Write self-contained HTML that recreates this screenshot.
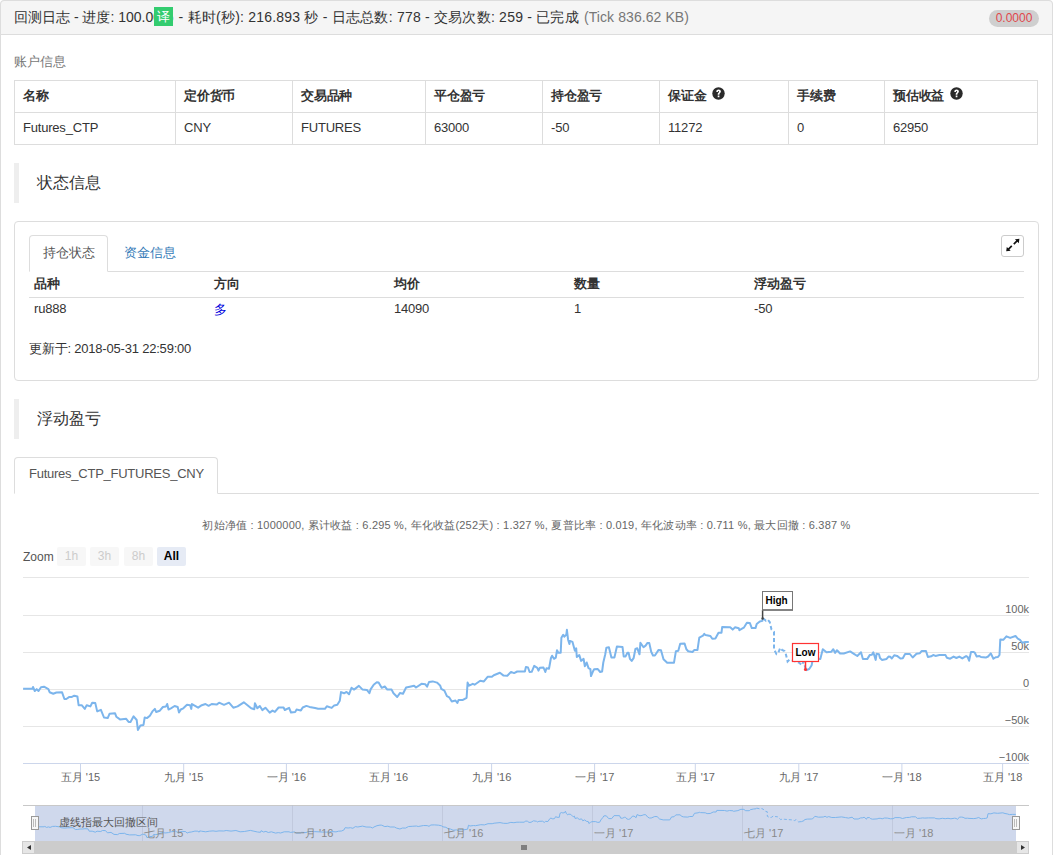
<!DOCTYPE html>
<html><head><meta charset="utf-8">
<style>
*{box-sizing:border-box;margin:0;padding:0}
html,body{width:1053px;height:855px;overflow:hidden;background:#fff}
body{font-family:"Liberation Sans",sans-serif;font-size:14px;color:#333;position:relative}
.abs{position:absolute}
.panel{position:absolute;left:0;top:0;width:1053px;height:900px;border:1px solid #ddd;border-radius:4px}
.head{position:absolute;left:0;top:0;width:1053px;height:35px;background:#f5f5f5;border:1px solid #ddd;border-radius:4px 4px 0 0}
.htxt{position:absolute;top:9px;font-size:14px;white-space:nowrap;color:#333}
.gray{color:#777}
.yi{display:inline-block;background:#3cb371;color:#fff;}
.badge{position:absolute;left:989px;top:10px;width:50px;height:17px;border-radius:9px;background:#cfcfcf;color:#e0474c;font-size:12px;text-align:center;line-height:17px}
table{border-collapse:collapse}
.acct{position:absolute;left:14px;top:80px;width:1024px;border:1px solid #ddd}
.acct td,.acct th{border:1px solid #ddd;height:32px;padding:0 8px 2px;letter-spacing:-0.2px;text-align:left;font-size:13px;white-space:nowrap}
.acct th{font-weight:bold}
.sec{position:absolute;left:14px;width:5px;height:40px;background:#eee}
.sectxt{position:absolute;left:37px;font-size:16px;color:#333}
.box{position:absolute;left:14px;top:221px;width:1025px;height:160px;border:1px solid #ddd;border-radius:4px}
.tab{position:absolute;border:1px solid #ddd;border-bottom-color:#fff;border-radius:4px 4px 0 0;background:#fff}
.q{display:inline-block;width:12px;height:12px;border-radius:50%;background:#222;color:#fff;font-size:10px;line-height:12px;text-align:center;font-weight:bold;vertical-align:1px;margin-left:5px}
.ph{top:275px;font-size:13px;font-weight:bold;white-space:nowrap}
.pb{top:301px;font-size:13px;white-space:nowrap;letter-spacing:-0.2px}
.zb{position:absolute;top:547px;width:29px;height:19px;background:#f7f7f7;color:#ccc;font-size:12px;text-align:center;line-height:19px;border-radius:2px}
.zb.sel{background:#e6ebf5;color:#000;font-weight:bold}
.qi{position:relative;left:6px;top:0px;vertical-align:0px}
</style></head><body>
<div class="panel"></div>
<div class="head"></div>
<div class="htxt" style="left:14px">回测日志 - 进度: 100.00%</div>
<div class="htxt" style="left:178.6px;letter-spacing:0.22px">- 耗时(秒): 216.893 秒 - 日志总数: 778 - 交易次数: 259 - 已完成</div>
<div class="htxt gray" style="left:584px;letter-spacing:0.08px">(Tick 836.62 KB)</div>
<div class="abs" style="left:154px;top:7px;width:19px;height:19px;background:#33cc6f;color:#fff;font-size:13px;line-height:19px;text-align:center">译</div>
<div class="badge">0.0000</div>

<div class="abs gray" style="left:14px;top:53px;font-size:13px">账户信息</div>
<table class="acct">
<tr><th style="width:161px">名称</th><th style="width:117px">定价货币</th><th style="width:133px">交易品种</th><th style="width:117px">平仓盈亏</th><th style="width:117px">持仓盈亏</th><th style="width:129px">保证金<svg class="qi" width="13" height="13" viewBox="0 0 13 13"><circle cx="6.5" cy="6.5" r="6.2" fill="#2a2a2a"/><path d="M4.3 5.0 C4.3 3.3 5.4 2.6 6.6 2.6 C7.9 2.6 8.9 3.4 8.9 4.6 C8.9 5.9 7.4 6.2 7.4 7.3 L7.4 7.7 L5.7 7.7 L5.7 7.1 C5.7 5.6 7.1 5.4 7.1 4.7 C7.1 4.3 6.9 4.0 6.6 4.0 C6.1 4.0 5.9 4.4 5.9 5.0 Z M5.7 8.6 H7.4 V10.2 H5.7 Z" fill="#fff"/></svg></th><th style="width:96px">手续费</th><th>预估收益<svg class="qi" width="13" height="13" viewBox="0 0 13 13"><circle cx="6.5" cy="6.5" r="6.2" fill="#2a2a2a"/><path d="M4.3 5.0 C4.3 3.3 5.4 2.6 6.6 2.6 C7.9 2.6 8.9 3.4 8.9 4.6 C8.9 5.9 7.4 6.2 7.4 7.3 L7.4 7.7 L5.7 7.7 L5.7 7.1 C5.7 5.6 7.1 5.4 7.1 4.7 C7.1 4.3 6.9 4.0 6.6 4.0 C6.1 4.0 5.9 4.4 5.9 5.0 Z M5.7 8.6 H7.4 V10.2 H5.7 Z" fill="#fff"/></svg></th></tr>
<tr><td>Futures_CTP</td><td>CNY</td><td>FUTURES</td><td>63000</td><td>-50</td><td>11272</td><td>0</td><td>62950</td></tr>
</table>

<div class="sec" style="top:163px"></div>
<div class="sectxt" style="top:173px">状态信息</div>

<div class="box"></div>
<div class="abs" style="left:29px;top:271px;width:995px;height:1px;background:#ddd"></div>
<div class="tab" style="left:29px;top:235px;width:79px;height:37px"></div>
<div class="abs" style="left:43px;top:244px;font-size:13px;color:#555">持仓状态</div>
<div class="abs" style="left:124px;top:244px;font-size:13px;color:#337ab7">资金信息</div>


<div class="abs" style="left:29px;top:297px;width:995px;height:1px;background:#ddd"></div>
<div class="abs ph" style="left:34px">品种</div><div class="abs ph" style="left:214px">方向</div><div class="abs ph" style="left:394px">均价</div><div class="abs ph" style="left:574px">数量</div><div class="abs ph" style="left:754px">浮动盈亏</div>
<div class="abs pb" style="left:34px">ru888</div><div class="abs pb" style="left:214px;color:#0000dd">多</div><div class="abs pb" style="left:394px">14090</div><div class="abs pb" style="left:574px">1</div><div class="abs pb" style="left:754px">-50</div>
<div class="abs" style="left:29px;top:340px;font-size:13px;letter-spacing:-0.2px">更新于: 2018-05-31 22:59:00</div>
<div class="abs" style="left:1001px;top:235px;width:23px;height:22px;border:1px solid #ccc;border-radius:3px"></div>
<svg class="abs" style="left:1001px;top:235px" width="23" height="22" viewBox="0 0 23 22"><path d="M18.4 3.8 L17.8 8.2 L16.4 6.8 L13.4 9.8 L12.2 8.6 L15.2 5.6 L13.9 4.3 Z" fill="#111"/><path d="M5.2 16.3 L5.8 11.9 L7.2 13.3 L10.2 10.3 L11.4 11.5 L8.4 14.5 L9.7 15.8 Z" fill="#111"/></svg>

<div class="sec" style="top:399px"></div>
<div class="sectxt" style="top:409px">浮动盈亏</div>
<div class="abs" style="left:14px;top:493px;width:1025px;height:1px;background:#ddd"></div>
<div class="tab" style="left:14px;top:457px;width:204px;height:37px"></div>
<div class="abs" style="left:29px;top:466px;font-size:13px;color:#555;letter-spacing:-0.25px">Futures_CTP_FUTURES_CNY</div>

<div class="abs" style="left:0;top:518px;width:1053px;text-align:center;font-size:11px;color:#666;letter-spacing:0.2px">初始净值 : 1000000, 累计收益 : 6.295 %, 年化收益(252天) : 1.327 %, 夏普比率 : 0.019, 年化波动率 : 0.711 %, 最大回撤 : 6.387 %</div>
<div class="abs" style="left:23px;top:550px;font-size:12px;color:#555">Zoom</div>
<div class="zb" style="left:57px">1h</div><div class="zb" style="left:90px">3h</div><div class="zb" style="left:124px">8h</div><div class="zb sel" style="left:157px">All</div>
<svg class="abs" style="left:0;top:0" width="1053" height="855" viewBox="0 0 1053 855">
<line x1="23" x2="1029" y1="577.5" y2="577.5" stroke="#e6e6e6" stroke-width="1"/><line x1="23" x2="1029" y1="615.5" y2="615.5" stroke="#e6e6e6" stroke-width="1"/><line x1="23" x2="1029" y1="652.5" y2="652.5" stroke="#e6e6e6" stroke-width="1"/><line x1="23" x2="1029" y1="689.5" y2="689.5" stroke="#e6e6e6" stroke-width="1"/><line x1="23" x2="1029" y1="726.5" y2="726.5" stroke="#e6e6e6" stroke-width="1"/>
<line x1="23" x2="1029" y1="763.5" y2="763.5" stroke="#ccd6eb"/>
<line x1="80.5" x2="80.5" y1="763" y2="781" stroke="#ccd6eb"/><line x1="183.7" x2="183.7" y1="763" y2="781" stroke="#ccd6eb"/><line x1="286.4" x2="286.4" y1="763" y2="781" stroke="#ccd6eb"/><line x1="388.4" x2="388.4" y1="763" y2="781" stroke="#ccd6eb"/><line x1="491.6" x2="491.6" y1="763" y2="781" stroke="#ccd6eb"/><line x1="594.6" x2="594.6" y1="763" y2="781" stroke="#ccd6eb"/><line x1="695.3" x2="695.3" y1="763" y2="781" stroke="#ccd6eb"/><line x1="798.8" x2="798.8" y1="763" y2="781" stroke="#ccd6eb"/><line x1="901.9" x2="901.9" y1="763" y2="781" stroke="#ccd6eb"/><line x1="1002.6" x2="1002.6" y1="763" y2="781" stroke="#ccd6eb"/>
<g font-family="Liberation Sans, sans-serif" font-size="11" fill="#666"><text x="1029" y="612.5" text-anchor="end">100k</text><text x="1029" y="649.5" text-anchor="end">50k</text><text x="1029" y="686.5" text-anchor="end">0</text><text x="1029" y="723.5" text-anchor="end">−50k</text><text x="1029" y="760.5" text-anchor="end">−100k</text><text x="80.5" y="781" text-anchor="middle">五月 '15</text><text x="183.7" y="781" text-anchor="middle">九月 '15</text><text x="286.4" y="781" text-anchor="middle">一月 '16</text><text x="388.4" y="781" text-anchor="middle">五月 '16</text><text x="491.6" y="781" text-anchor="middle">九月 '16</text><text x="594.6" y="781" text-anchor="middle">一月 '17</text><text x="695.3" y="781" text-anchor="middle">五月 '17</text><text x="798.8" y="781" text-anchor="middle">九月 '17</text><text x="901.9" y="781" text-anchor="middle">一月 '18</text><text x="1002.6" y="781" text-anchor="middle">五月 '18</text></g>
<path d="M23.1 688.8 L32.3 688.8 L33.0 687.0 L34.8 691.0 L36.7 689.1 L38.5 691.0 L41.0 687.3 L44.0 686.7 L48.4 689.1 L49.6 692.2 L53.3 693.7 L56.4 692.5 L62.0 692.2 L64.4 699.0 L66.3 699.0 L69.4 696.9 L71.9 696.9 L74.3 695.7 L77.4 696.5 L78.6 705.2 L81.7 705.2 L84.8 708.9 L86.7 705.2 L90.4 706.4 L92.2 702.7 L95.3 703.1 L97.2 711.4 L100.9 709.8 L104.0 717.5 L107.7 718.1 L109.5 713.8 L115.0 713.2 L116.3 716.7 L120.0 719.4 L126.2 718.8 L128.6 721.9 L130.5 721.9 L133.6 716.3 L136.7 720.0 L137.9 729.9 L140.4 725.6 L143.5 724.9 L144.7 717.5 L146.9 718.1 L149.9 715.7 L152.4 711.4 L154.9 708.9 L156.1 712.0 L159.8 710.7 L162.9 707.0 L166.0 706.4 L167.2 704.0 L168.5 709.5 L170.9 708.3 L174.6 706.0 L177.7 707.0 L179.0 712.6 L180.8 709.5 L183.3 708.3 L187.0 704.8 L190.1 705.2 L191.3 708.9 L191.9 704.0 L193.8 705.2 L198.1 707.7 L201.8 705.2 L205.5 704.0 L208.6 705.8 L211.7 704.0 L216.6 704.6 L219.1 702.7 L224.0 704.8 L229.0 702.7 L233.3 707.7 L237.6 706.4 L243.8 702.3 L247.5 705.2 L251.2 708.3 L254.3 709.3 L254.9 703.3 L257.3 708.3 L259.8 706.0 L262.3 710.1 L265.4 707.7 L269.7 712.6 L272.5 710.6 L274.9 711.9 L278.6 707.5 L283.6 707.5 L284.8 710.0 L289.1 707.9 L291.0 712.5 L295.3 711.9 L296.5 709.6 L300.9 710.4 L302.7 707.5 L306.4 705.9 L309.5 706.9 L315.1 708.1 L318.1 708.8 L324.9 708.8 L326.8 706.3 L331.7 707.9 L334.2 705.4 L337.3 704.7 L339.8 700.7 L341.0 692.1 L344.1 693.3 L346.5 691.9 L349.0 694.3 L351.5 687.8 L354.0 689.6 L358.9 685.9 L362.6 689.6 L366.9 689.9 L369.4 693.1 L370.6 689.4 L373.7 684.7 L376.8 682.2 L378.6 682.5 L381.7 687.8 L384.8 686.5 L387.3 689.6 L391.6 689.6 L393.5 693.3 L397.2 697.0 L399.9 693.1 L403.0 693.7 L406.1 687.5 L409.8 686.7 L414.1 685.7 L416.0 687.5 L421.5 683.8 L425.2 684.2 L427.1 686.7 L429.0 682.0 L432.7 681.4 L437.0 682.6 L440.1 685.4 L441.3 688.8 L444.4 690.6 L446.9 696.2 L449.3 697.4 L451.8 701.5 L455.5 700.5 L457.3 703.0 L458.6 699.9 L462.9 699.9 L466.6 697.8 L467.6 682.6 L469.1 685.7 L472.8 683.8 L474.6 684.7 L480.2 680.7 L483.9 681.4 L487.6 676.8 L491.9 676.8 L493.8 675.2 L499.9 672.7 L503.6 675.6 L507.3 675.8 L511.0 671.9 L514.1 673.1 L517.2 671.5 L520.0 671.5 L524.9 671.5 L525.9 666.9 L528.0 667.5 L529.6 672.0 L531.7 671.8 L534.2 665.9 L537.3 667.8 L538.5 670.6 L539.8 667.8 L543.5 667.5 L545.3 672.0 L546.5 668.3 L549.0 668.7 L550.9 658.2 L552.1 655.7 L554.0 658.8 L555.8 657.6 L557.0 650.2 L558.3 652.7 L560.7 652.7 L561.4 637.8 L563.2 634.8 L564.4 636.6 L566.3 634.8 L566.9 629.8 L568.1 639.7 L569.4 644.0 L570.0 640.9 L572.5 641.9 L574.9 650.8 L576.2 648.3 L576.8 657.0 L579.3 655.1 L581.1 660.9 L583.6 658.8 L584.8 666.2 L586.7 662.5 L588.5 668.1 L590.4 669.1 L591.0 676.1 L592.8 671.8 L594.1 669.3 L597.8 669.1 L600.2 672.0 L602.1 671.5 L603.3 662.5 L605.2 654.5 L606.4 647.7 L608.9 647.3 L611.4 657.6 L614.4 657.6 L616.9 646.5 L622.5 646.9 L623.7 656.4 L625.6 656.4 L627.4 652.7 L628.6 652.7 L629.9 658.8 L631.7 660.9 L633.6 658.2 L635.4 649.0 L637.3 648.3 L639.5 654.3 L640.4 642.8 L643.5 647.3 L645.6 645.6 L647.5 642.9 L649.3 643.1 L651.2 651.8 L653.0 655.5 L654.9 655.5 L658.6 649.9 L661.0 650.3 L663.5 659.2 L667.2 662.7 L674.0 662.7 L675.9 651.2 L678.3 650.8 L680.2 643.8 L684.5 643.4 L686.4 649.3 L688.2 651.2 L692.5 652.0 L694.4 649.9 L697.5 649.9 L699.3 637.6 L703.0 635.7 L704.3 633.9 L705.5 635.1 L710.4 636.0 L712.3 638.8 L715.4 638.5 L718.5 632.7 L721.5 632.7 L722.2 626.9 L730.2 627.3 L732.7 629.6 L735.1 627.3 L738.8 628.3 L739.4 630.2 L743.8 627.7 L746.9 622.8 L749.9 623.1 L751.8 628.1 L755.5 628.1 L756.7 624.0 L759.8 621.5 L762.3 620.9 L763.0 618.3 M806.0 670.2 L809.2 669.0 L811.7 665.2 L812.3 661.5 L815.0 659.5 L819.1 659.1 L820.3 659.1 L822.8 649.2 L826.5 652.3 L831.4 651.7 L833.3 649.2 L835.1 652.9 L837.0 650.2 L840.1 653.5 L843.8 653.5 L850.1 651.4 L854.3 654.1 L857.3 656.0 L861.0 652.3 L862.9 659.1 L867.2 659.1 L869.7 655.1 L871.9 654.7 L873.3 652.3 L875.7 659.9 L876.6 653.7 L879.0 654.2 L880.0 658.0 L881.9 659.9 L886.6 658.9 L888.5 656.6 L890.4 656.8 L891.8 658.5 L894.2 655.3 L897.1 655.9 L900.4 658.5 L902.8 658.2 L905.1 654.0 L909.9 654.0 L912.7 657.5 L916.5 653.7 L919.9 653.2 L921.8 650.9 L926.0 651.1 L927.9 657.0 L931.3 656.3 L933.2 655.0 L935.5 655.9 L939.3 655.1 L945.5 655.1 L946.9 657.8 L950.2 658.7 L953.6 656.6 L956.4 658.0 L959.3 656.6 L962.3 658.4 L966.1 656.1 L967.6 656.9 L969.1 660.7 L971.0 651.9 L973.3 651.9 L974.8 652.7 L976.7 656.5 L979.4 656.1 L980.9 656.9 L985.8 657.6 L988.1 656.5 L990.8 653.4 L993.4 658.8 L995.7 657.2 L998.0 656.9 L999.5 655.0 L1000.3 639.4 L1003.3 639.8 L1006.4 636.3 L1010.2 637.9 L1015.5 636.0 L1017.8 638.6 L1020.0 639.9 L1022.3 642.8 L1025.3 642.0 L1028.8 641.9" fill="none" stroke="#7cb5ec" stroke-width="2" stroke-linejoin="round"/>
<path d="M763.0 618.3 L766.0 620.8 L767.8 619.8 L769.7 622.0 L771.5 629.4 L774.0 631.9 L774.0 649.2 L776.5 654.1 L778.3 652.9 L780.2 648.0 L782.0 649.8 L784.5 651.0 L785.7 653.5 L787.6 661.5 L789.4 659.7 L791.9 660.3 L799.3 662.8 L801.8 665.2 L803.6 661.5 L806.0 670.2" fill="none" stroke="#7cb5ec" stroke-width="2" stroke-dasharray="4,2.5"/>
<!-- High flag -->
<line x1="762.6" x2="762.6" y1="610" y2="618.5" stroke="#444" stroke-width="1.5"/>
<circle cx="762.6" cy="618.5" r="1.2" fill="#444"/>
<rect x="762.5" y="591.5" width="30" height="18.5" fill="#fff" stroke="#777" stroke-width="1"/>
<line x1="762" x2="793" y1="610" y2="610" stroke="#777" stroke-width="1.6"/>
<text x="765.5" y="604" font-family="Liberation Sans, sans-serif" font-size="10" font-weight="bold" fill="#000">High</text>
<!-- Low flag -->
<line x1="805.5" x2="805.5" y1="661" y2="669.5" stroke="#f33" stroke-width="1.5"/>
<circle cx="805.5" cy="669.5" r="1.6" fill="#f33"/>
<rect x="792.5" y="643.5" width="26" height="18" fill="#fff" stroke="#f33" stroke-width="1.2"/>
<text x="795.5" y="655.8" font-family="Liberation Sans, sans-serif" font-size="10" font-weight="bold" fill="#000">Low</text>
<!-- navigator -->
<rect x="35" y="805" width="981" height="36" fill="#cfd8ec"/>
<line x1="23" x2="1029" y1="805.5" y2="805.5" stroke="#c8c8c8"/>
<line x1="142.5" x2="142.5" y1="805" y2="841" stroke="#b8c0d4" stroke-opacity="0.6"/><line x1="292.5" x2="292.5" y1="805" y2="841" stroke="#b8c0d4" stroke-opacity="0.6"/><line x1="442.5" x2="442.5" y1="805" y2="841" stroke="#b8c0d4" stroke-opacity="0.6"/><line x1="592.5" x2="592.5" y1="805" y2="841" stroke="#b8c0d4" stroke-opacity="0.6"/><line x1="742.5" x2="742.5" y1="805" y2="841" stroke="#b8c0d4" stroke-opacity="0.6"/><line x1="892.5" x2="892.5" y1="805" y2="841" stroke="#b8c0d4" stroke-opacity="0.6"/>
<path d="M35.1 826.8 L44.1 826.8 L44.8 826.4 L46.5 827.4 L48.4 826.9 L50.1 827.4 L52.6 826.4 L55.5 826.3 L59.8 826.9 L60.9 827.7 L64.5 828.1 L67.6 827.8 L73.0 827.7 L75.4 829.5 L77.2 829.5 L80.2 829.0 L82.7 829.0 L85.0 828.7 L88.0 828.9 L89.2 831.2 L92.2 831.2 L95.3 832.2 L97.1 831.2 L100.7 831.5 L102.5 830.5 L105.5 830.6 L107.4 832.8 L111.0 832.4 L114.0 834.4 L117.6 834.6 L119.3 833.5 L124.7 833.3 L126.0 834.2 L129.6 834.9 L135.6 834.8 L138.0 835.6 L139.8 835.6 L142.8 834.1 L145.9 835.1 L147.0 837.7 L149.5 836.6 L152.5 836.4 L153.7 834.4 L155.8 834.6 L158.7 834.0 L161.2 832.8 L163.6 832.2 L164.8 833.0 L168.4 832.6 L171.4 831.7 L174.4 831.5 L175.6 830.9 L176.9 832.3 L179.2 832.0 L182.8 831.4 L185.8 831.7 L187.1 833.1 L188.9 832.3 L191.3 832.0 L194.9 831.1 L197.9 831.2 L199.1 832.2 L199.7 830.9 L201.5 831.2 L205.7 831.8 L209.3 831.2 L213.0 830.9 L216.0 831.3 L219.0 830.9 L223.8 831.0 L226.2 830.5 L231.0 831.1 L235.9 830.5 L240.1 831.8 L244.3 831.5 L250.3 830.4 L253.9 831.2 L257.5 832.0 L260.5 832.3 L261.1 830.7 L263.5 832.0 L265.9 831.4 L268.3 832.5 L271.4 831.8 L275.6 833.1 L278.3 832.6 L280.6 833.0 L284.2 831.8 L289.1 831.8 L290.3 832.4 L294.5 831.9 L296.3 833.1 L300.5 833.0 L301.7 832.3 L306.0 832.6 L307.7 831.8 L311.3 831.4 L314.4 831.6 L319.8 831.9 L322.8 832.1 L329.4 832.1 L331.2 831.5 L336.0 831.9 L338.5 831.2 L341.5 831.0 L343.9 830.0 L345.1 827.7 L348.1 828.0 L350.4 827.7 L352.9 828.3 L355.3 826.6 L357.8 827.0 L362.5 826.1 L366.1 827.0 L370.3 827.1 L372.8 828.0 L373.9 827.0 L377.0 825.7 L380.0 825.1 L381.7 825.2 L384.8 826.6 L387.8 826.2 L390.2 827.0 L394.4 827.0 L396.3 828.0 L399.9 829.0 L402.5 828.0 L405.5 828.1 L408.6 826.5 L412.2 826.3 L416.4 826.0 L418.2 826.5 L423.6 825.5 L427.2 825.6 L429.0 826.3 L430.9 825.0 L434.5 824.9 L438.7 825.2 L441.7 825.9 L442.9 826.8 L445.9 827.3 L448.3 828.8 L450.7 829.1 L453.1 830.2 L456.7 829.9 L458.5 830.6 L459.8 829.8 L463.9 829.8 L467.6 829.2 L468.5 825.2 L470.0 826.0 L473.6 825.5 L475.4 825.7 L480.8 824.7 L484.4 824.9 L488.0 823.7 L492.2 823.7 L494.1 823.2 L500.0 822.6 L503.6 823.3 L507.2 823.4 L510.8 822.4 L513.9 822.7 L516.9 822.2 L519.6 822.2 L524.4 822.2 L525.4 821.0 L527.4 821.2 L529.0 822.4 L531.0 822.3 L533.5 820.8 L536.5 821.3 L537.7 822.0 L538.9 821.3 L542.5 821.2 L544.3 822.4 L545.5 821.4 L547.9 821.5 L549.8 818.7 L550.9 818.1 L552.8 818.9 L554.5 818.6 L555.7 816.6 L557.0 817.3 L559.3 817.3 L560.0 813.3 L561.7 812.5 L562.9 813.0 L564.8 812.5 L565.4 811.2 L566.5 813.8 L567.8 815.0 L568.4 814.1 L570.8 814.4 L573.2 816.8 L574.4 816.1 L575.0 818.4 L577.4 817.9 L579.2 819.4 L581.6 818.9 L582.8 820.8 L584.7 819.9 L586.4 821.3 L588.3 821.6 L588.9 823.5 L590.6 822.3 L591.9 821.7 L595.5 821.6 L597.8 822.4 L599.7 822.2 L600.9 819.9 L602.7 817.7 L603.9 815.9 L606.3 815.8 L608.7 818.6 L611.7 818.6 L614.1 815.6 L619.6 815.7 L620.7 818.2 L622.6 818.2 L624.4 817.3 L625.5 817.3 L626.8 818.9 L628.5 819.4 L630.4 818.7 L632.2 816.3 L634.0 816.1 L636.1 817.7 L637.0 814.6 L640.0 815.8 L642.1 815.4 L643.9 814.7 L645.7 814.7 L647.6 817.0 L649.3 818.0 L651.2 818.0 L654.8 816.5 L657.1 816.6 L659.6 819.0 L663.2 819.9 L669.8 819.9 L671.6 816.9 L674.0 816.8 L675.8 814.9 L680.0 814.8 L681.9 816.4 L683.6 816.9 L687.8 817.1 L689.7 816.5 L692.7 816.5 L694.5 813.3 L698.1 812.8 L699.3 812.3 L700.5 812.6 L705.3 812.8 L707.1 813.6 L710.2 813.5 L713.2 812.0 L716.1 812.0 L716.8 810.4 L724.6 810.5 L727.0 811.1 L729.4 810.5 L733.0 810.8 L733.6 811.3 L737.9 810.6 L740.9 809.3 L743.8 809.4 L745.7 810.7 L749.3 810.7 L750.4 809.7 L753.5 809.0 L755.9 808.8 L756.6 808.1 M798.5 821.9 L801.6 821.6 L804.1 820.6 L804.6 819.6 L807.3 819.1 L811.3 819.0 L812.4 819.0 L814.9 816.3 L818.5 817.2 L823.3 817.0 L825.1 816.3 L826.9 817.3 L828.7 816.6 L831.8 817.5 L835.4 817.5 L841.5 816.9 L845.6 817.6 L848.5 818.1 L852.1 817.2 L854.0 819.0 L858.2 819.0 L860.6 817.9 L862.8 817.8 L864.1 817.2 L866.5 819.2 L867.3 817.5 L869.7 817.7 L870.7 818.7 L872.5 819.2 L877.1 818.9 L878.9 818.3 L880.8 818.4 L882.2 818.8 L884.5 818.0 L887.3 818.1 L890.6 818.8 L892.9 818.7 L895.1 817.6 L899.8 817.6 L902.5 818.5 L906.3 817.5 L909.6 817.4 L911.4 816.8 L915.5 816.8 L917.4 818.4 L920.7 818.2 L922.5 817.9 L924.8 818.1 L928.5 817.9 L934.5 817.9 L935.9 818.6 L939.1 818.9 L942.4 818.3 L945.2 818.7 L948.0 818.3 L950.9 818.8 L954.6 818.2 L956.1 818.4 L957.5 819.4 L959.4 817.1 L961.6 817.1 L963.1 817.3 L965.0 818.3 L967.6 818.2 L969.0 818.4 L973.8 818.6 L976.1 818.3 L978.7 817.5 L981.2 818.9 L983.5 818.5 L985.7 818.4 L987.2 817.9 L988.0 813.7 L990.9 813.8 L993.9 812.9 L997.6 813.3 L1002.8 812.8 L1005.0 813.5 L1007.2 813.9 L1009.4 814.6 L1012.3 814.4 L1015.8 814.4" fill="none" stroke="#7cb5ec" stroke-width="1"/>
<path d="M756.6 808.1 L759.5 808.8 L761.3 808.5 L763.1 809.1 L764.9 811.1 L767.3 811.8 L767.3 816.3 L769.7 817.6 L771.5 817.3 L773.3 816.0 L775.1 816.5 L777.5 816.8 L778.7 817.5 L780.6 819.6 L782.3 819.1 L784.8 819.3 L792.0 819.9 L794.4 820.6 L796.2 819.6 L798.5 821.9" fill="none" stroke="#7cb5ec" stroke-width="1" stroke-dasharray="3,2"/>
<g font-family="Liberation Sans, sans-serif" font-size="11" fill="#888"><text x="144.0" y="837">七月 '15</text><text x="294.0" y="837">一月 '16</text><text x="444.0" y="837">七月 '16</text><text x="594.0" y="837">一月 '17</text><text x="744.0" y="837">七月 '17</text><text x="894.0" y="837">一月 '18</text></g>
<text x="59" y="826" font-family="Liberation Sans, sans-serif" font-size="11" fill="#555">虚线指最大回撤区间</text>
<rect x="31.5" y="816.5" width="7" height="13" fill="#f7f7f7" stroke="#999"/>
<line x1="33.5" x2="33.5" y1="819" y2="827" stroke="#bbb"/><line x1="35.5" x2="35.5" y1="819" y2="827" stroke="#bbb"/>
<rect x="1012.5" y="816.5" width="7" height="13" fill="#f7f7f7" stroke="#999"/>
<line x1="1014.5" x2="1014.5" y1="819" y2="827" stroke="#bbb"/><line x1="1016.5" x2="1016.5" y1="819" y2="827" stroke="#bbb"/>
<!-- scrollbar -->
<rect x="23" y="841" width="1006" height="13" fill="#f2f2f2"/>
<rect x="35" y="841" width="981" height="13" fill="#cccccc"/>
<rect x="22.5" y="841.5" width="12" height="12" fill="#e6e6e6" stroke="#ccc"/>
<rect x="1016.5" y="841.5" width="12" height="12" fill="#e6e6e6" stroke="#ccc"/>
<path d="M31 845 L27 847.5 L31 850 Z" fill="#333"/>
<path d="M1021 845 L1025 847.5 L1021 850 Z" fill="#333"/>
<path d="M522 845 v5 M524 845 v5 M526 845 v5" stroke="#333" stroke-width="1"/>
</svg>
</body></html>
